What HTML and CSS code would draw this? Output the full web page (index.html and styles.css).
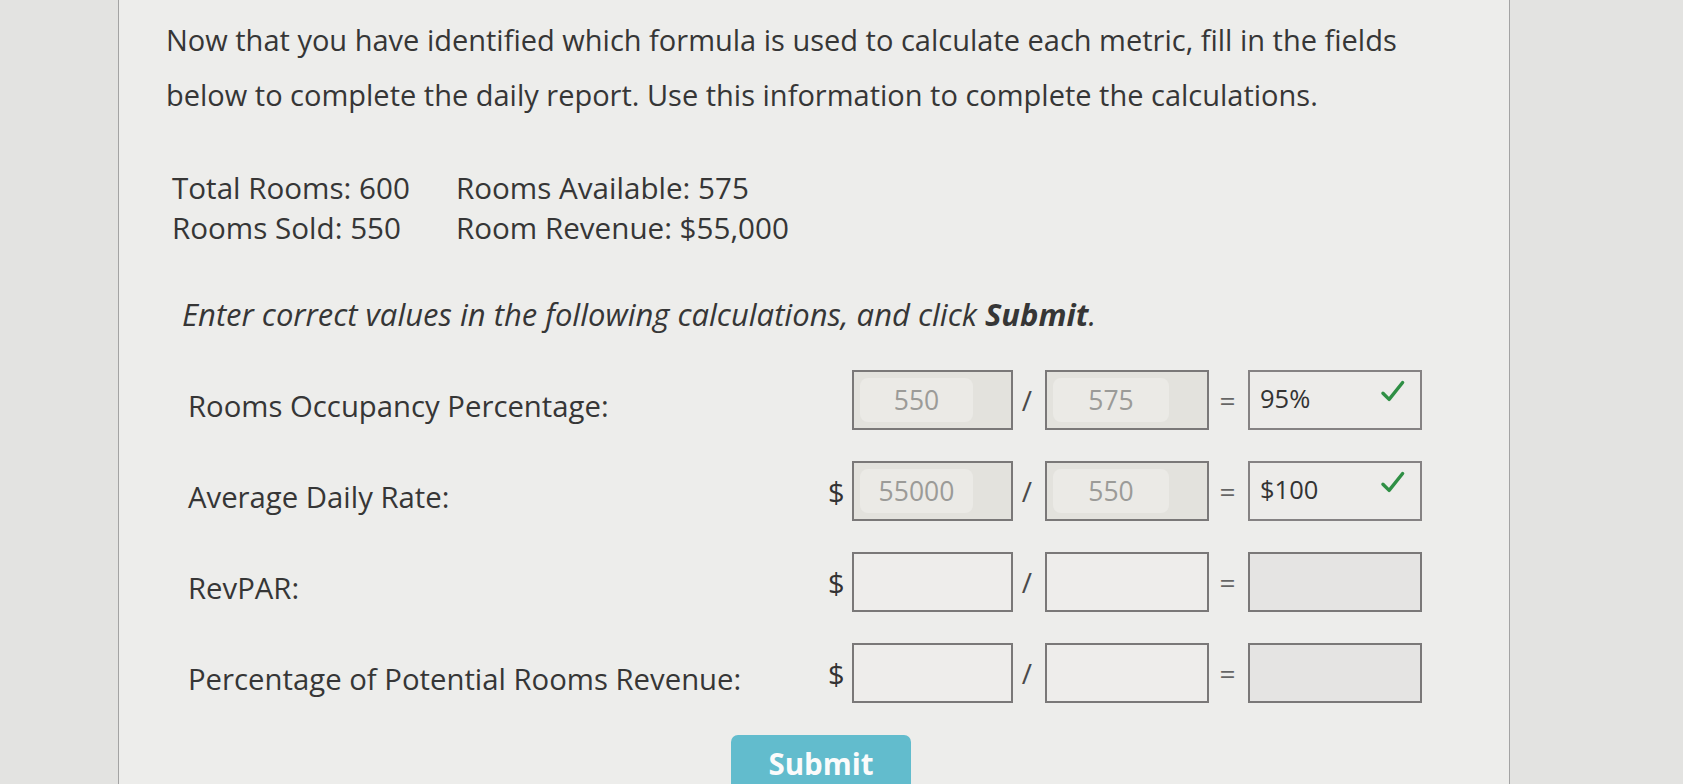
FILE: index.html
```html
<!DOCTYPE html>
<html lang="en">
<head>
<meta charset="utf-8">
<title>Daily Report</title>
<link rel="stylesheet" href="styles.css">
</head>
<body>
<div class="page">
  <main class="card">
    <p class="intro">Now that you have identified which formula is used to calculate each metric, fill in the fields below to complete the daily report. Use this information to complete the calculations.</p>

    <div class="facts">
      <span>Total Rooms: 600</span><span>Rooms Available: 575</span>
      <span>Rooms Sold: 550</span><span>Room Revenue: $55,000</span>
    </div>

    <p class="instructions">Enter correct values in the following calculations, and click <b>Submit</b>.</p>

    <div class="calcs">
      <div class="calc-row">
        <span class="label">Rooms Occupancy Percentage:</span>
        <span class="cur"></span>
        <div class="box filled"><span class="inner">550</span></div>
        <span class="op">/</span>
        <div class="box filled"><span class="inner">575</span></div>
        <span class="op eq">=</span>
        <div class="box result"><span class="val">95%</span><svg class="check" viewBox="0 0 24 24"><path d="M3.5 13.5 L9 19 L21 4" fill="none" stroke="#2f8f45" stroke-width="3" stroke-linecap="round" stroke-linejoin="round"/></svg></div>
      </div>
      <div class="calc-row">
        <span class="label">Average Daily Rate:</span>
        <span class="cur">$</span>
        <div class="box filled"><span class="inner">55000</span></div>
        <span class="op">/</span>
        <div class="box filled"><span class="inner">550</span></div>
        <span class="op eq">=</span>
        <div class="box result"><span class="val">$100</span><svg class="check" viewBox="0 0 24 24"><path d="M3.5 13.5 L9 19 L21 4" fill="none" stroke="#2f8f45" stroke-width="3" stroke-linecap="round" stroke-linejoin="round"/></svg></div>
      </div>
      <div class="calc-row">
        <span class="label">RevPAR:</span>
        <span class="cur">$</span>
        <div class="box empty"></div>
        <span class="op">/</span>
        <div class="box empty"></div>
        <span class="op eq">=</span>
        <div class="box disabled"></div>
      </div>
      <div class="calc-row">
        <span class="label">Percentage of Potential Rooms Revenue:</span>
        <span class="cur">$</span>
        <div class="box empty"></div>
        <span class="op">/</span>
        <div class="box empty"></div>
        <span class="op eq">=</span>
        <div class="box disabled"></div>
      </div>
    </div>

    <div class="actions">
      <button class="submit" type="button">Submit</button>
    </div>
  </main>
</div>
</body>
</html>
```
FILE: styles.css
```css
html, body {
  margin: 0;
  padding: 0;
  height: 100%;
  overflow: hidden;
}
body {
  background: #e3e3e1;
  font-family: "Open Sans", "Noto Sans", sans-serif;
  color: #363636;
}
.page {
  height: 784px;
  padding-left: 118px;
}
.card {
  box-sizing: border-box;
  width: 1392px;
  height: 784px;
  background: #ededeb;
  border-left: 1px solid #a3a3a3;
  border-right: 1px solid #a3a3a3;
  padding: 12px 0 0 47px;
}
.intro {
  margin: 0;
  width: 1300px;
  font-size: 29px;
  line-height: 55px;
}
.facts {
  display: grid;
  grid-template-columns: 284px auto;
  justify-content: start;
  margin: 46px 0 0 6px;
  font-size: 29.6px;
  line-height: 40px;
}
.instructions {
  margin: 46px 0 0 16px;
  font-size: 31px;
  line-height: 40px;
  font-style: italic;
}
.instructions b {
  font-weight: 700;
}
.calcs {
  margin: 36px 0 0 22px;
  display: flex;
  flex-direction: column;
  gap: 31px;
}
.calc-row {
  display: grid;
  grid-template-columns: 634px 30px 161px 32px 164px 39px 174px;
  align-items: center;
  height: 60px;
  font-size: 29.3px;
}
.label {
  white-space: nowrap;
  padding-top: 12px;
}
.cur {
  font-size: 29px;
  color: #333;
  padding-left: 6px;
}
.op {
  text-align: center;
  font-size: 28px;
  color: #4a4a4a;
  padding-right: 4px;
}
.op.eq {
  padding-right: 2px;
  padding-left: 0;
  color: #666;
}
.box {
  box-sizing: border-box;
  height: 60px;
  border: 2px solid #7a7878;
  background: #edecea;
  display: flex;
  align-items: center;
}
.box.filled {
  background: #e3e2dd;
  padding: 6px 38px 6px 6px;
}
.box.filled .inner {
  flex: 1;
  height: 100%;
  border-radius: 8px;
  background: #ebeae6;
  display: flex;
  align-items: center;
  justify-content: center;
  font-size: 26.5px;
  color: #9b9b98;
}
.box.result {
  justify-content: space-between;
  padding: 0 14px 0 10px;
  border-color: #858283;
}
.box.result .val {
  font-size: 25.5px;
  color: #333;
  margin-top: -4px;
}
.check {
  width: 27px;
  height: 27px;
  align-self: flex-start;
  margin-top: 6px;
}
.box.empty {
  background: #eeedeb;
}
.box.disabled {
  background: #e5e4e3;
}
.actions {
  display: flex;
  align-items: flex-start;
  padding-left: 565px;
  margin-top: 32px;
}
.submit {
  display: block;
  box-sizing: border-box;
  width: 180px;
  height: 80px;
  border: none;
  border-radius: 7px;
  background: #62bccd;
  color: #fbfbfb;
  font-family: "Open Sans", "Noto Sans", sans-serif;
  font-weight: 700;
  font-size: 29.5px;
  line-height: 38px;
  padding: 10px 0 32px;
  text-align: center;
}
```
